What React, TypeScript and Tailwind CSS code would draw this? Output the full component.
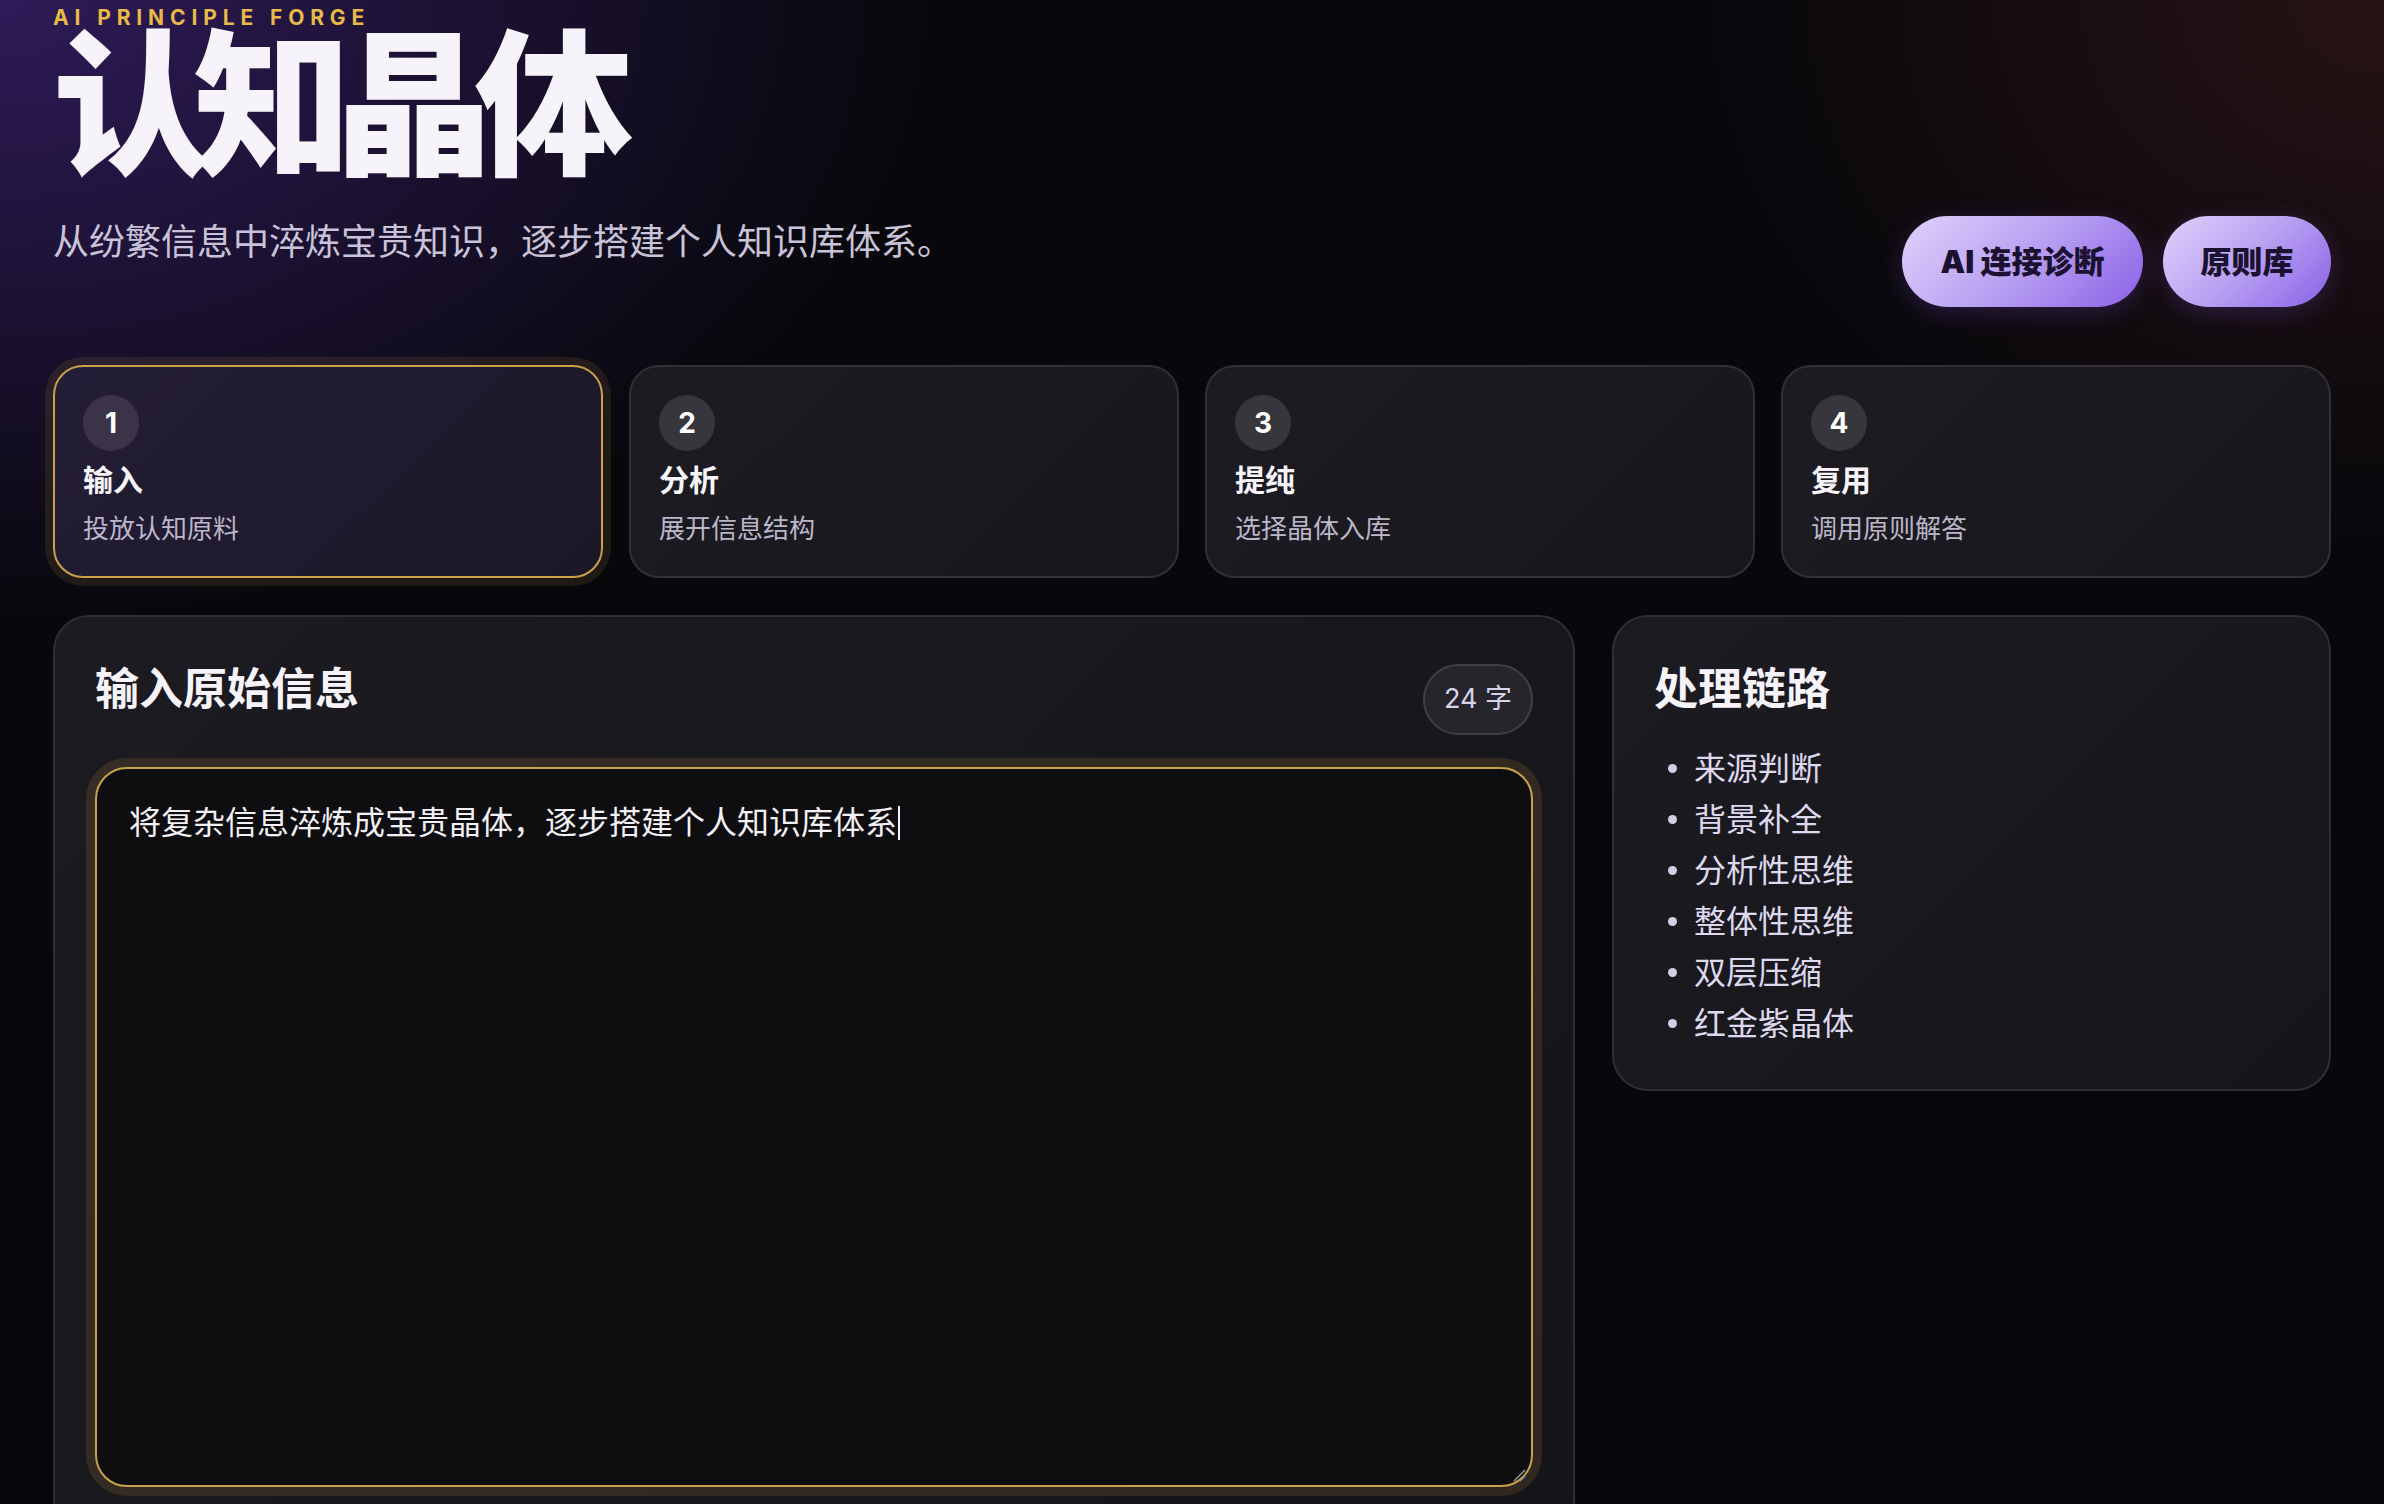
import React from "react";

const steps = [
  { n: "1", title: "输入", desc: "投放认知原料", active: true },
  { n: "2", title: "分析", desc: "展开信息结构", active: false },
  { n: "3", title: "提纯", desc: "选择晶体入库", active: false },
  { n: "4", title: "复用", desc: "调用原则解答", active: false },
];

const chain = ["来源判断", "背景补全", "分析性思维", "整体性思维", "双层压缩", "红金紫晶体"];

export default function App() {
  return (
    <div className="min-h-screen w-full overflow-hidden bg-[#08080c] bg-[radial-gradient(ellipse_1500px_1000px_at_0%_0%,rgba(70,38,135,0.62),transparent_62%),radial-gradient(ellipse_1000px_800px_at_100%_0%,rgba(85,34,34,0.4),transparent_68%)] font-[Inter,'Noto_Sans_CJK_SC',sans-serif] text-white">
      <div className="px-[53px] pt-[7px]">
        {/* Header */}
        <header className="flex items-end justify-between">
          <div className="mb-[40px]">
            <p className="text-[21px] font-bold uppercase leading-none tracking-[0.28em] text-[#e9b949]">
              AI Principle Forge
            </p>
            <h1 className="mt-[3px] text-[158px] font-black leading-[0.95] tracking-[-0.11em] text-[#f6f3fb]">
              认知晶体
            </h1>
            <p className="mt-[36px] text-[36px] leading-[1.4] text-[#c9c3d9]">
              从纷繁信息中淬炼宝贵知识，逐步搭建个人知识库体系。
            </p>
          </div>
          <div className="flex gap-[20px]">
            <button className="flex h-[91px] w-[241px] items-center justify-center rounded-full bg-[linear-gradient(135deg,#e1d2fb_0%,#b8a0f2_50%,#8b62e6_100%)] text-[31px] font-black text-[#1b1131] shadow-[0_6px_24px_rgba(120,80,220,0.25)]">
              AI 连接诊断
            </button>
            <button className="flex h-[91px] w-[168px] items-center justify-center rounded-full bg-[linear-gradient(135deg,#e1d2fb_0%,#b8a0f2_50%,#8b62e6_100%)] text-[31px] font-black text-[#1b1131] shadow-[0_6px_24px_rgba(120,80,220,0.25)]">
              原则库
            </button>
          </div>
        </header>

        {/* Steps */}
        <div className="mt-[58px] grid grid-cols-4 gap-[26px]">
          {steps.map((s) =>
            s.active ? (
              <div
                key={s.n}
                className="rounded-[30px] border-2 border-[#caa24a] bg-[linear-gradient(135deg,#241d37_0%,#1b1826_100%)] p-[28px] shadow-[0_0_0_8px_rgba(190,150,70,0.13)]"
              >
                <div className="flex h-[56px] w-[56px] items-center justify-center rounded-full bg-[#3b3449] text-[28px] font-bold text-white">
                  {s.n}
                </div>
                <div className="mt-[8px] text-[30px] font-bold leading-[1.4] text-[#f7f5fb]">{s.title}</div>
                <div className="mt-[10px] text-[26px] leading-[1.4] text-[#bcb6ca]">{s.desc}</div>
              </div>
            ) : (
              <div
                key={s.n}
                className="rounded-[30px] border-2 border-[#313037] bg-[linear-gradient(135deg,#1d1c22_0%,#17161b_100%)] p-[28px]"
              >
                <div className="flex h-[56px] w-[56px] items-center justify-center rounded-full bg-[#37363d] text-[28px] font-bold text-white">
                  {s.n}
                </div>
                <div className="mt-[8px] text-[30px] font-bold leading-[1.4] text-[#f7f5fb]">{s.title}</div>
                <div className="mt-[10px] text-[26px] leading-[1.4] text-[#bcb6ca]">{s.desc}</div>
              </div>
            )
          )}
        </div>

        {/* Main */}
        <div className="mt-[37px] grid grid-cols-[1fr_719px] items-start gap-[37px]">
          <section className="rounded-[36px] border-2 border-[#2f2e35] bg-[linear-gradient(135deg,#1c1b21_0%,#151418_100%)] p-[40px]">
            <div className="flex items-start justify-between">
              <h2 className="mt-[4px] text-[44px] font-bold leading-[1.3] text-[#f6f3fb]">输入原始信息</h2>
              <span className="mt-[7px] flex h-[71px] items-center rounded-full border-2 border-[#403f46] bg-[#26252b] px-[19px] text-[27px] text-[#d8d2ea]">
                24 字
              </span>
            </div>
            <div className="relative mt-[32px] h-[720px] rounded-[32px] border-2 border-[#caa24a] bg-[#0e0e10] px-[32px] pt-[28px] shadow-[0_0_0_9px_rgba(190,150,70,0.16)]">
              <div className="text-[32px] leading-[1.6] text-[#f3f1f7]">
                将复杂信息淬炼成宝贵晶体，逐步搭建个人知识库体系
                <span className="ml-[1px] inline-block h-[34px] w-[2px] translate-y-[6px] bg-[#f3f1f7]" />
              </div>
              <svg
                className="absolute bottom-[3px] right-[5px]"
                width="14"
                height="14"
                viewBox="0 0 14 14"
              >
                <line x1="13" y1="2" x2="2" y2="13" stroke="#9a9aa0" strokeWidth="1.5" />
                <line x1="13" y1="8" x2="8" y2="13" stroke="#9a9aa0" strokeWidth="1.5" />
              </svg>
            </div>
            <div className="h-[40px]" />
          </section>

          <aside className="rounded-[36px] border-2 border-[#2f2e35] bg-[linear-gradient(135deg,#1c1b21_0%,#161519_100%)] p-[40px]">
            <h2 className="mt-[4px] text-[44px] font-bold leading-[1.3] text-[#f6f3fb]">处理链路</h2>
            <ul className="mt-[25px]">
              {chain.map((c) => (
                <li key={c} className="flex items-center text-[32px] leading-[51px] text-[#ddd8ee]">
                  <span className="ml-[14px] mr-[17px] h-[9px] w-[9px] rounded-full bg-[#d3cee3]" />
                  {c}
                </li>
              ))}
            </ul>
          </aside>
        </div>
      </div>
    </div>
  );
}
